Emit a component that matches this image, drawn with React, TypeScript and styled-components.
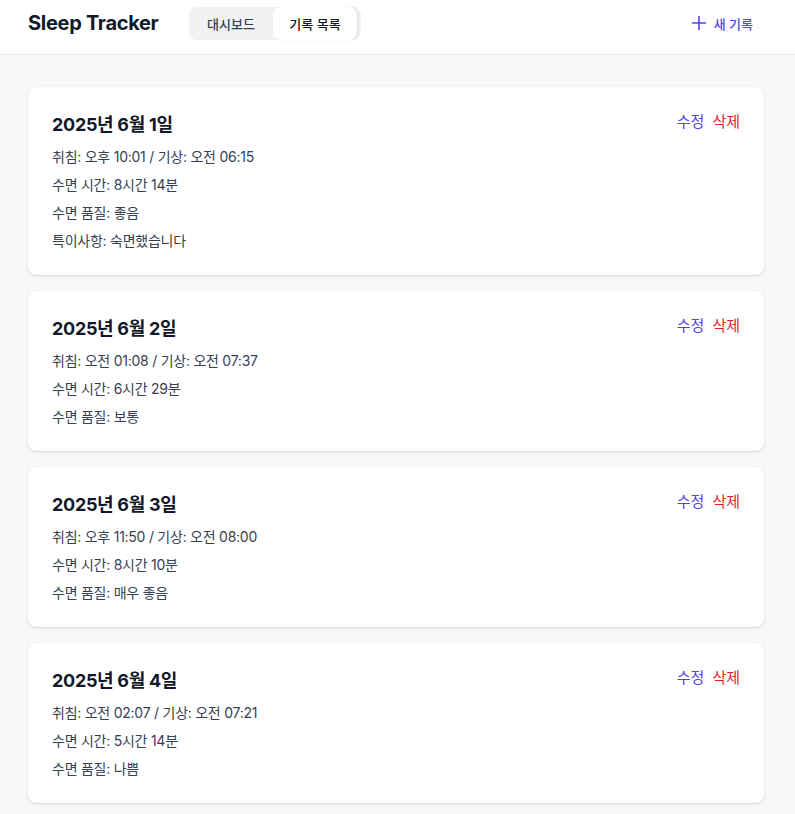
import React from "react";
import styled, { createGlobalStyle } from "styled-components";

const GlobalStyle = createGlobalStyle`
  html, body {
    margin: 0;
    padding: 0;
    background: #f7f8fa;
    font-family: Inter, "Noto Sans CJK KR", sans-serif;
    color: #111827;
  }
  * { box-sizing: border-box; }
`;

const Header = styled.header`
  height: 55px;
  background: #ffffff;
  border-bottom: 1px solid #e9ebee;
  display: flex;
  align-items: center;
  padding: 0 28px 8px;
`;

const Brand = styled.h1`
  margin: 0;
  font-size: 20px;
  font-weight: 700;
  letter-spacing: -0.3px;
  color: #111827;
  width: 161px;
`;

const TabGroup = styled.nav`
  display: flex;
  background: #f0f1f3;
  border-radius: 8px;
  padding-right: 4px;
  height: 33px;
`;

const Tab = styled.button<{ $active?: boolean }>`
  border: 0;
  outline: 0;
  cursor: pointer;
  width: 84px;
  height: 33px;
  border-radius: 8px;
  font-family: inherit;
  font-size: 13px;
  font-weight: 500;
  color: ${(p) => (p.$active ? "#111827" : "#374151")};
  background: ${(p) => (p.$active ? "#ffffff" : "transparent")};
  box-shadow: ${(p) => (p.$active ? "1px 0 2px rgba(0,0,0,0.08)" : "none")};
`;

const NewButton = styled.button`
  margin-left: auto;
  border: 0;
  background: transparent;
  display: flex;
  align-items: center;
  gap: 7px;
  color: #4f46e5;
  font-family: inherit;
  font-size: 13px;
  font-weight: 500;
  cursor: pointer;
  padding: 0 14px 0 0;
`;

const Main = styled.main`
  padding: 32px 31px 16px 28px;
  display: flex;
  flex-direction: column;
  gap: 16px;
`;

const Card = styled.article`
  background: #ffffff;
  border-radius: 8px;
  box-shadow: 0 1px 3px rgba(0, 0, 0, 0.1), 0 1px 2px rgba(0, 0, 0, 0.06);
  padding: 24px;
  display: flex;
  justify-content: space-between;
  align-items: flex-start;
`;

const Info = styled.div`
  display: flex;
  flex-direction: column;
  gap: 8px;
`;

const DateTitle = styled.h2`
  margin: 0;
  font-size: 18px;
  line-height: 28px;
  font-weight: 700;
  letter-spacing: -0.3px;
  color: #111827;
`;

const Line = styled.p`
  margin: 0;
  font-size: 14px;
  line-height: 20px;
  letter-spacing: -0.25px;
  color: #374151;
`;

const Actions = styled.div`
  display: flex;
  gap: 8px;
  margin-top: 1px;
`;

const ActionLink = styled.button<{ $danger?: boolean }>`
  border: 0;
  background: transparent;
  padding: 0;
  font-family: inherit;
  font-size: 15px;
  line-height: 20px;
  cursor: pointer;
  color: ${(p) => (p.$danger ? "#e11d2e" : "#4f46e5")};
`;

type Entry = {
  date: string;
  bed: string;
  wake: string;
  duration: string;
  quality: string;
  note?: string;
};

const entries: Entry[] = [
  { date: "2025년 6월 1일", bed: "오후 10:01", wake: "오전 06:15", duration: "8시간 14분", quality: "좋음", note: "숙면했습니다" },
  { date: "2025년 6월 2일", bed: "오전 01:08", wake: "오전 07:37", duration: "6시간 29분", quality: "보통" },
  { date: "2025년 6월 3일", bed: "오후 11:50", wake: "오전 08:00", duration: "8시간 10분", quality: "매우 좋음" },
  { date: "2025년 6월 4일", bed: "오전 02:07", wake: "오전 07:21", duration: "5시간 14분", quality: "나쁨" },
];

const PlusIcon = () => (
  <svg width="16" height="16" viewBox="0 0 16 16" fill="none" stroke="currentColor" strokeWidth="1.6" strokeLinecap="round">
    <path d="M8 1.5v13M1.5 8h13" />
  </svg>
);

export default function App() {
  return (
    <>
      <GlobalStyle />
      <Header>
        <Brand>Sleep Tracker</Brand>
        <TabGroup>
          <Tab>대시보드</Tab>
          <Tab $active>기록 목록</Tab>
        </TabGroup>
        <NewButton>
          <PlusIcon />
          새 기록
        </NewButton>
      </Header>
      <Main>
        {entries.map((e) => (
          <Card key={e.date}>
            <Info>
              <DateTitle>{e.date}</DateTitle>
              <Line>
                취침: {e.bed} / 기상: {e.wake}
              </Line>
              <Line>수면 시간: {e.duration}</Line>
              <Line>수면 품질: {e.quality}</Line>
              {e.note && <Line>특이사항: {e.note}</Line>}
            </Info>
            <Actions>
              <ActionLink>수정</ActionLink>
              <ActionLink $danger>삭제</ActionLink>
            </Actions>
          </Card>
        ))}
      </Main>
    </>
  );
}
